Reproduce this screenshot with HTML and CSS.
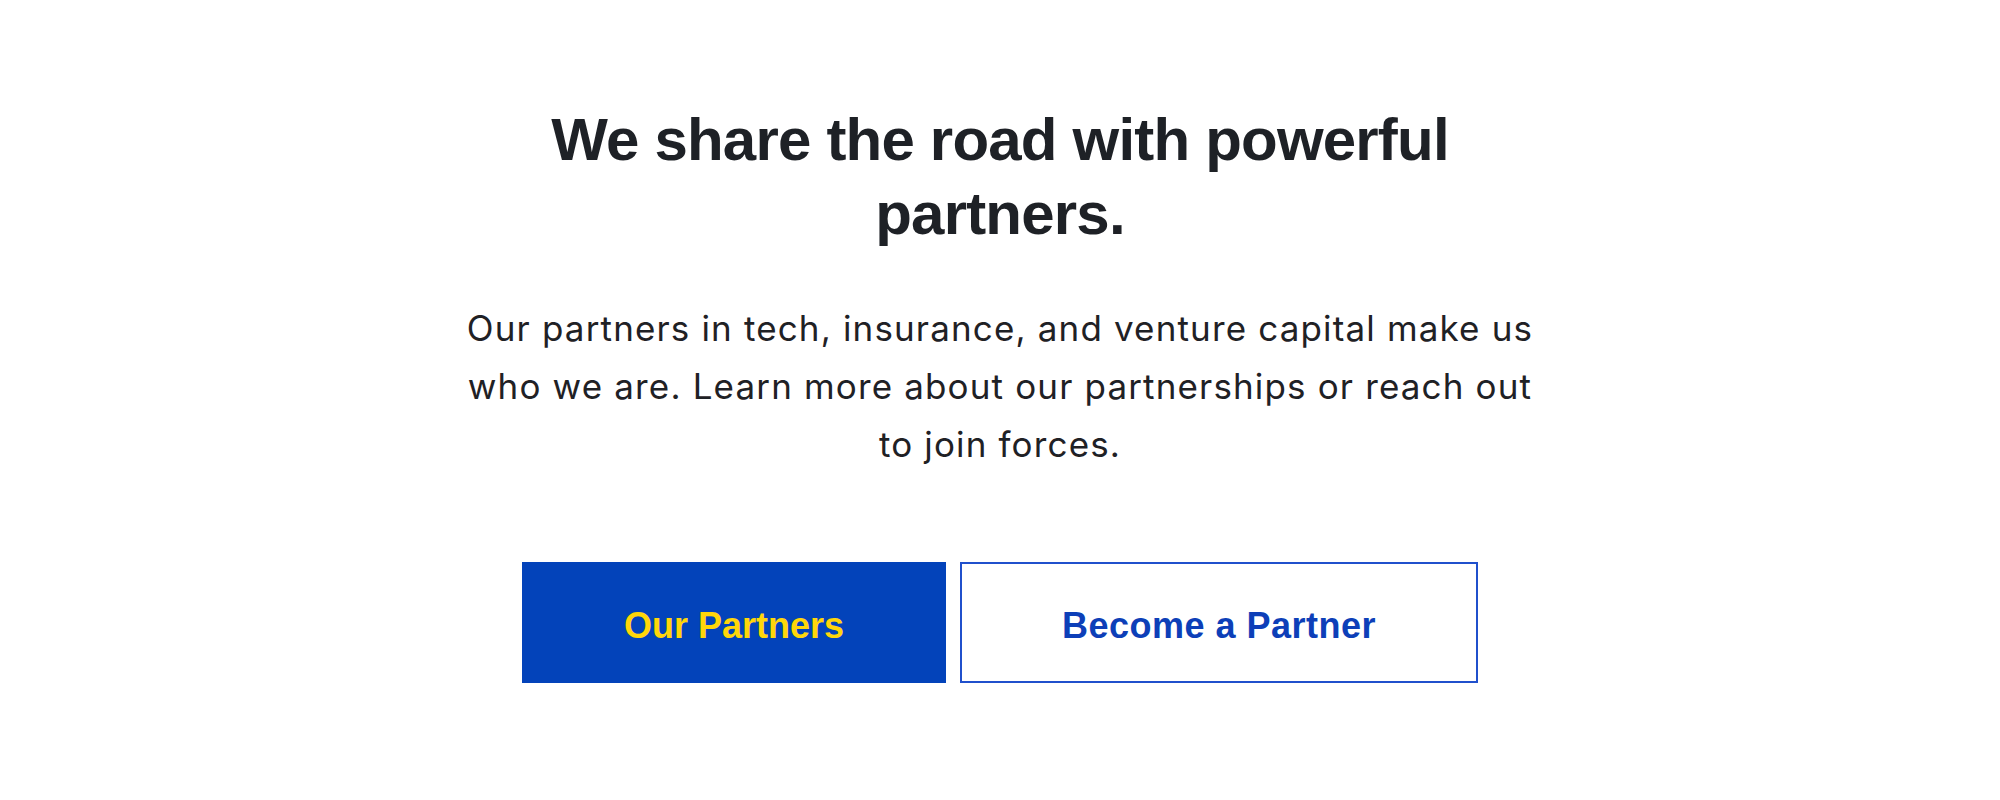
FILE: index.html
```html
<!DOCTYPE html>
<html lang="en">
<head>
<meta charset="utf-8">
<title>Partners</title>
<link rel="stylesheet" href="styles.css">
</head>
<body>
<section class="partners">
  <h1 class="partners__title">We share the road with powerful partners.</h1>
  <p class="partners__text">Our partners in tech, insurance, and venture capital make us who we are. Learn more about our partnerships or reach out to join forces.</p>
  <div class="partners__actions">
    <a class="btn btn--primary" href="#">Our Partners</a>
    <a class="btn btn--outline" href="#">Become a Partner</a>
  </div>
</section>
</body>
</html>
```
FILE: styles.css
```css
html, body {
  margin: 0;
  padding: 0;
  background: #ffffff;
}

.partners {
  display: flex;
  flex-direction: column;
  align-items: center;
  padding-top: 103px;
}

.partners__title {
  margin: 0;
  max-width: 960px;
  font-family: "Liberation Sans", Arial, sans-serif;
  font-weight: 700;
  font-size: 60px;
  line-height: 74px;
  letter-spacing: -0.8px;
  color: #1e2126;
  text-align: center;
}

.partners__text {
  margin: 48px 0 0;
  max-width: 1100px;
  font-family: Inter, "Liberation Sans", sans-serif;
  font-weight: 400;
  font-size: 35px;
  line-height: 58px;
  letter-spacing: 1.15px;
  color: #1f2125;
  text-align: center;
}

.partners__actions {
  display: flex;
  gap: 14px;
  margin-top: 89px;
}

.btn {
  display: flex;
  align-items: center;
  justify-content: center;
  box-sizing: border-box;
  height: 121px;
  padding: 7px 100px 0;
  font-family: "Liberation Sans", Arial, sans-serif;
  font-weight: 700;
  font-size: 36px;
  text-decoration: none;
}

.btn--primary {
  background: #0343ba;
  color: #ffd60a;
  border: 2px solid #0343ba;
}

.btn--outline {
  background: #ffffff;
  color: #0d3fb8;
  border: 2px solid #2050cc;
  letter-spacing: 0.5px;
}
```
